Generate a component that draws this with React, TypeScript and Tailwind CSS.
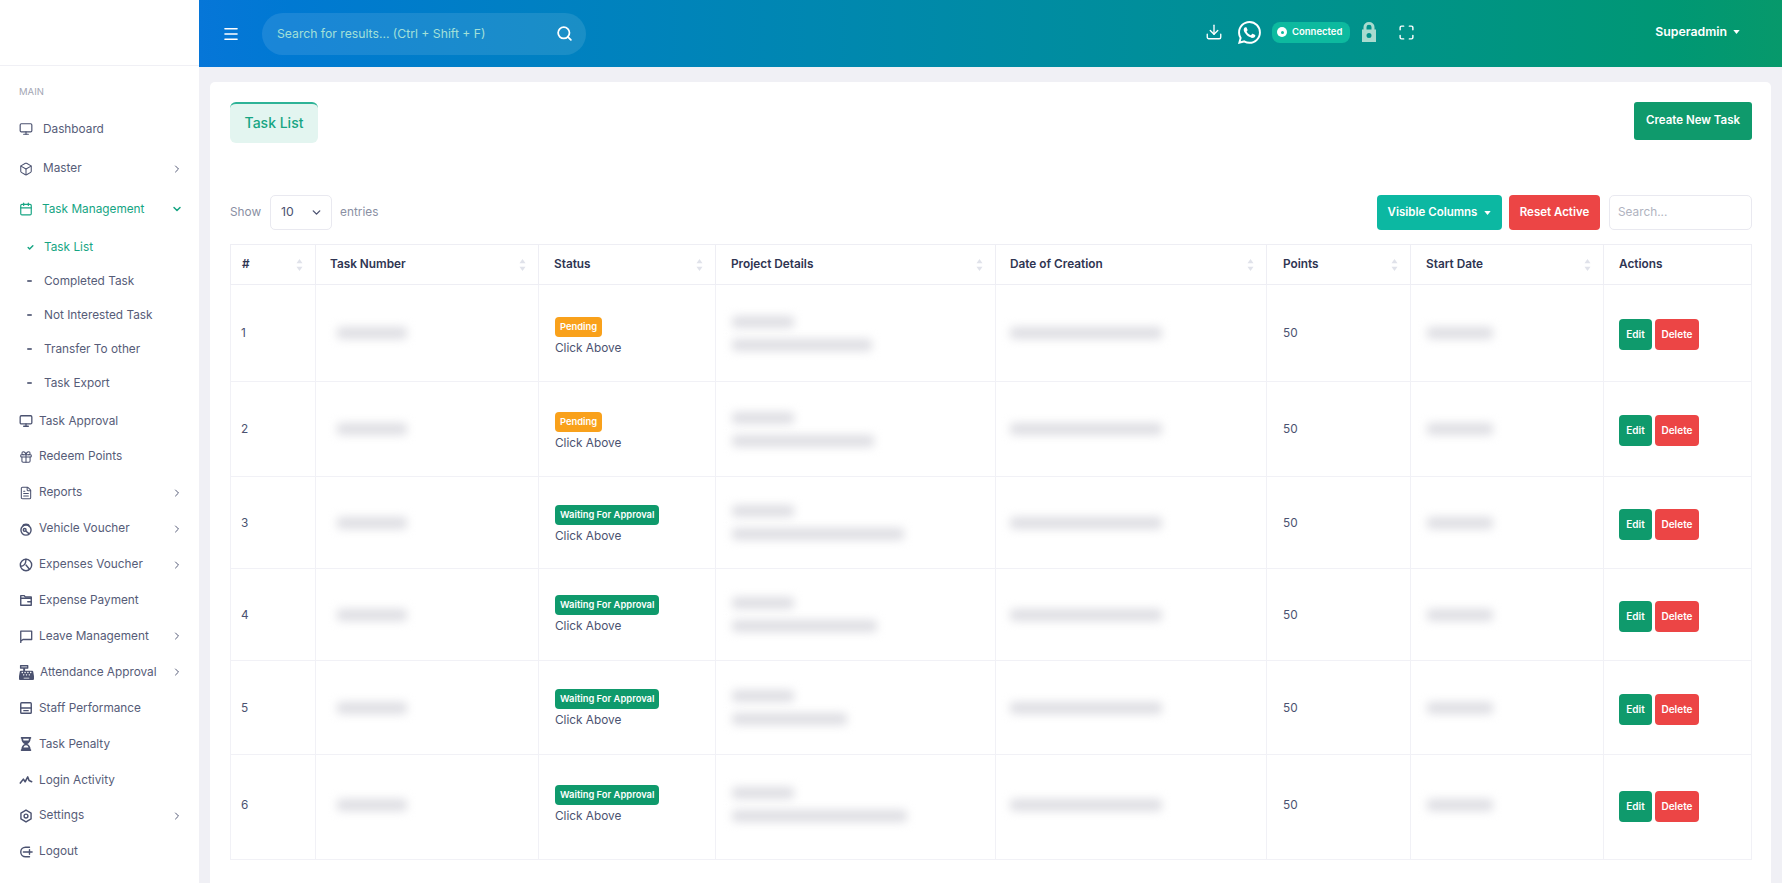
import { Box, Calendar, Check, ChevronDown, ChevronRight, Download, FileText, Gift, Menu, Monitor, Search, Maximize } from "lucide-react"
import { BsWhatsapp } from "react-icons/bs"
import { FaCashRegister, FaHourglassHalf } from "react-icons/fa"
import type { ReactNode } from "react"

const subItems = ["Task List", "Completed Task", "Not Interested Task", "Transfer To other", "Task Export"]

const iconClass = "w-[14px] h-[14px] text-[#4b5270] shrink-0"

function Glyph({ children, width = 1.6 }: { children: ReactNode; width?: number }) {
  return (
    <svg
      viewBox="0 0 16 16"
      className={iconClass}
      fill="none"
      stroke="currentColor"
      strokeWidth={width}
      strokeLinecap="round"
      strokeLinejoin="round"
    >
      {children}
    </svg>
  )
}

const navItems: { label: string; icon: ReactNode; arrow?: boolean }[] = [
  { label: "Task Approval", icon: <Monitor className={iconClass} strokeWidth={2.2} /> },
  { label: "Redeem Points", icon: <Gift className={iconClass} strokeWidth={1.8} /> },
  { label: "Reports", icon: <FileText className={iconClass} strokeWidth={1.8} />, arrow: true },
  {
    label: "Vehicle Voucher",
    icon: (
      <Glyph>
        <circle cx="8" cy="9.2" r="5.8" />
        <path d="M4.5 4.5C5 2 11 2 11.5 4.5" />
        <circle cx="6.5" cy="9" r="1.6" />
        <path d="M8 10.5l3 2.5" />
      </Glyph>
    ),
    arrow: true,
  },
  {
    label: "Expenses Voucher",
    icon: (
      <Glyph>
        <circle cx="8" cy="8" r="6.5" />
        <path d="M1.8 9.5C5 9.5 8 7 8 1.5" />
        <path d="M8 8l4 4.8" />
      </Glyph>
    ),
    arrow: true,
  },
  {
    label: "Expense Payment",
    icon: (
      <Glyph>
        <path d="M2 14V3h4l1 1.5h7V14z" />
        <path d="M2 6h12" />
        <path d="M10 10h4" />
      </Glyph>
    ),
  },
  {
    label: "Leave Management",
    icon: (
      <Glyph width={1.5}>
        <path d="M2 15.5V2.5h12.5v9.5H4.5L2 14" />
      </Glyph>
    ),
    arrow: true,
  },
  { label: "Attendance Approval", icon: <FaCashRegister className="w-[15px] h-[15px] text-[#4b5270] shrink-0" />, arrow: true },
  {
    label: "Staff Performance",
    icon: (
      <Glyph>
        <rect x="2" y="2" width="12" height="12" rx="1" />
        <path d="M2 8h12" />
        <path d="M5.5 11h5" />
      </Glyph>
    ),
  },
  { label: "Task Penalty", icon: <FaHourglassHalf className={iconClass} /> },
  {
    label: "Login Activity",
    icon: (
      <Glyph width={1.8}>
        <path d="M1.5 11.5L5 7l2 3 3-5.5 1.5 4 3 1.5" />
      </Glyph>
    ),
  },
  {
    label: "Settings",
    icon: (
      <Glyph>
        <path d="M8 1.2l5.8 3.4v6.8L8 14.8l-5.8-3.4V4.6z" />
        <circle cx="8" cy="8" r="2.2" />
      </Glyph>
    ),
    arrow: true,
  },
  {
    label: "Logout",
    icon: (
      <Glyph>
        <path d="M12 2.5H7.5a5.5 5.5 0 0 0 0 11H12" />
        <path d="M5 8h10" />
        <path d="M12 5.5v5" />
      </Glyph>
    ),
  },
]

const rows = [
  { id: 1, h: "h-[97px]", status: "Pending", statusPad: "pt-[7px]", detailW: "w-[140px]" },
  { id: 2, h: "h-[95px]", status: "Pending", statusPad: "pt-[6px]", detailW: "w-[142px]" },
  { id: 3, h: "h-[92px]", status: "Waiting For Approval", statusPad: "pt-[5px]", detailW: "w-[172px]" },
  { id: 4, h: "h-[92px]", status: "Waiting For Approval", statusPad: "pt-[1px]", detailW: "w-[145px]" },
  { id: 5, h: "h-[94px]", status: "Waiting For Approval", statusPad: "pt-[2px]", detailW: "w-[115px]" },
  { id: 6, h: "h-[105px] [&>td]:pb-[5px]", status: "Waiting For Approval", statusPad: "", detailW: "w-[175px]" },
]

function SortCaret() {
  return (
    <svg viewBox="0 0 8 14" className="w-[7px] h-[12px] text-[#e0e2ea] shrink-0" fill="currentColor">
      <path d="M4 0l3.5 5h-7z" />
      <path d="M4 14L.5 9h7z" />
    </svg>
  )
}

function Th({ label, w, pl, sort = true }: { label: string; w: string; pl: string; sort?: boolean }) {
  return (
    <th className={`${w} ${pl} border border-[#eeeef4] pr-[12px] pt-[1px] text-left font-semibold text-[#2f3552]`}>
      <div className="flex items-center justify-between">
        <span>{label}</span>
        {sort && <SortCaret />}
      </div>
    </th>
  )
}

function Blur({ w }: { w: string }) {
  return <div className={`${w} h-[12px] rounded-sm bg-[#dedee3] blur-[5px]`} />
}

export default function App() {
  return (
    <div className="flex h-screen overflow-hidden bg-[#f0f0f5] font-['Inter',sans-serif] text-[11.8px] text-[#4b5270]">
      {/* Sidebar */}
      <aside className="w-[199px] shrink-0 bg-white text-[#565c78]">
        <div className="h-[66px] border-b border-[#f0f0f5]" />
        <div className="h-[43px] pl-[19px] pt-[19px] text-[9.5px] leading-[14px] text-[#a3a6b4]">MAIN</div>

        <div className="flex h-[40px] items-center pl-[19px]">
          <Monitor className="w-[14px] h-[14px] shrink-0 text-[#4b5270]" strokeWidth={2} />
          <span className="ml-[10px] pt-[1px]">Dashboard</span>
        </div>
        <div className="flex h-[39px] items-center pl-[19px] pr-[16px]">
          <Box className="w-[14px] h-[14px] shrink-0 text-[#4b5270]" strokeWidth={1.8} />
          <span className="ml-[10px] flex-1">Master</span>
          <ChevronRight className="w-[12px] h-[12px]" />
        </div>
        <div className="flex h-[42px] items-center pl-[19px] pr-[16px] text-[#16a583]">
          <Calendar className="w-[14px] h-[14px] shrink-0" strokeWidth={2} />
          <span className="ml-[9px] flex-1 pt-[1px]">Task Management</span>
          <ChevronDown className="w-[12px] h-[12px]" strokeWidth={3} />
        </div>

        <div className="mb-[3px]">
          {subItems.map((item, i) => (
            <div key={item} className={`flex h-[34px] items-center pl-[27px] ${i === 0 ? "text-[#16a583]" : ""}`}>
              <div className="flex w-[7px] items-center">
                {i === 0 ? (
                  <Check className="w-[7px] h-[7px]" strokeWidth={5} />
                ) : (
                  <div className="h-[2px] w-[5px] rounded-sm bg-[#6b7189]" />
                )}
              </div>
              <span className="ml-[10px] pt-[1px]">{item}</span>
            </div>
          ))}
        </div>

        {navItems.map((item) => (
          <div key={item.label} className="flex h-[35.9px] items-center pl-[19px] pr-[16px]">
            {item.icon}
            <span className="ml-[6px] flex-1 pt-[1px]">{item.label}</span>
            {item.arrow && <ChevronRight className="w-[12px] h-[12px]" />}
          </div>
        ))}
      </aside>

      <div className="flex min-w-0 flex-1 flex-col">
        {/* Header */}
        <header className="flex h-[67px] shrink-0 items-center bg-gradient-to-r from-[#0676d8] to-[#07996b] pl-[23px] pr-[42px] text-white">
          <Menu className="w-[18px] h-[18px]" strokeWidth={2.2} />
          <div className="ml-[22px] flex h-[42px] w-[324px] items-center justify-between rounded-[21px] bg-white/10 pl-[15px] pr-[13px]">
            <span className="pt-[1px] text-[12.2px] text-[#a3e0d8]">Search for results... (Ctrl + Shift + F)</span>
            <Search className="w-[17px] h-[17px]" strokeWidth={2.5} />
          </div>
          <div className="ml-[619px] flex items-center pb-[3px]">
            <Download className="w-[18px] h-[18px]" strokeWidth={1.8} />
            <BsWhatsapp className="ml-[15px] w-[23px] h-[23px]" />
            <div className="ml-[11px] flex h-[21px] w-[78px] items-center rounded-[8px] bg-[#0dba9f] pl-[5px] text-[9.5px] font-semibold">
              <div className="flex h-[10px] w-[10px] items-center justify-center rounded-full bg-white">
                <div className="h-[3px] w-[3px] rounded-full bg-[#0dba9f]" />
              </div>
              <span className="ml-[5px]">Connected</span>
            </div>
            <svg viewBox="0 0 16 20" className="ml-[11px] w-[16px] h-[20px] text-[#a9dbcf]" fill="currentColor" fillRule="evenodd">
              <path d="M2.5 7.5V5a5.5 5 0 0 1 11 0v2.5H15V20H1V7.5zM5.5 7.5h5V5a2.5 2.2 0 0 0-5 0zM8 11a2.5 2.5 0 1 0 0 5 2.5 2.5 0 0 0 0-5z" />
            </svg>
            <Maximize className="ml-[21px] w-[17px] h-[17px]" strokeWidth={2} />
          </div>
          <div className="ml-auto flex items-center pb-[3px] text-[12.3px] font-semibold">
            <span>Superadmin</span>
            <svg viewBox="0 0 8 5" className="ml-[6px] w-[7px] h-[4px]" fill="currentColor">
              <path d="M0 0h8L4 5z" />
            </svg>
          </div>
        </header>

        {/* Content */}
        <main className="flex-1 px-[11px] pt-[15px]">
          <div className="h-[820px] rounded-[5px] bg-white pl-[20px] pr-[19px] pt-[20px]">
            <div className="flex items-start justify-between">
              <div className="flex h-[41px] w-[88px] items-center justify-center rounded-[6px] border-t-2 border-[#2eb397] bg-[#e3f5f0] pb-[3px] text-[14px] font-medium text-[#16a583]">
                Task List
              </div>
              <button className="h-[38px] w-[118px] rounded-[3px] bg-[#0f9a6c] text-[11.5px] font-semibold text-white">
                Create New Task
              </button>
            </div>

            <div className="mt-[52px] flex items-center">
              <span className="text-[#8a8fa3]">Show</span>
              <div className="ml-[9px] flex h-[35px] w-[62px] items-center justify-between rounded-[5px] border border-[#e9e9f0] pl-[10px] pr-[8px]">
                <span className="text-[12.3px]">10</span>
                <ChevronDown className="w-[13px] h-[13px]" strokeWidth={2.5} />
              </div>
              <span className="ml-[8px] text-[#8a8fa3]">entries</span>

              <button className="ml-auto flex h-[35px] w-[125px] items-center justify-center rounded-[4px] bg-[#0cb8a2] text-[11.5px] font-semibold text-white">
                Visible Columns
                <svg viewBox="0 0 8 5" className="ml-[7px] w-[7px] h-[4px]" fill="currentColor">
                  <path d="M0 0h8L4 5z" />
                </svg>
              </button>
              <button className="ml-[7px] h-[35px] w-[91px] rounded-[4px] bg-[#ec4545] text-[11.5px] font-semibold text-white">
                Reset Active
              </button>
              <div className="ml-[9px] flex h-[35px] w-[143px] items-center rounded-[5px] border border-[#e9e9f0] pl-[8px] text-[#b0b3c0]">
                Search...
              </div>
            </div>

            <table className="mt-[14px] w-[1521px] table-fixed border-collapse">
              <thead>
                <tr className="h-[40px]">
                  <Th label="#" w="w-[85px]" pl="pl-[11px]" />
                  <Th label="Task Number" w="w-[223px]" pl="pl-[14px]" />
                  <Th label="Status" w="w-[177px]" pl="pl-[15px]" />
                  <Th label="Project Details" w="w-[280px]" pl="pl-[15px]" />
                  <Th label="Date of Creation" w="w-[271px]" pl="pl-[14px]" />
                  <Th label="Points" w="w-[144px]" pl="pl-[16px]" />
                  <Th label="Start Date" w="w-[193px]" pl="pl-[15px]" />
                  <Th label="Actions" w="w-[148px]" pl="pl-[15px]" sort={false} />
                </tr>
              </thead>
              <tbody>
                {rows.map((row) => (
                  <tr key={row.id} className={row.h}>
                    <td className="border border-[#f1f1f6] pl-[10px] pt-[2px]">{row.id}</td>
                    <td className="border border-[#f1f1f6] pl-[21px]">
                      <Blur w="w-[70px]" />
                    </td>
                    <td className={`border border-[#f1f1f6] pl-[16px] ${row.statusPad}`}>
                      <span
                        className={`inline-block rounded-[4px] px-[5px] py-[3px] text-[9.4px] font-semibold leading-[14px] text-white ${
                          row.status === "Pending" ? "bg-[#f9a11b]" : "bg-[#0f9a6c]"
                        }`}
                      >
                        {row.status}
                      </span>
                      <div className="mt-[2px] leading-[18px]">Click Above</div>
                    </td>
                    <td className="border border-[#f1f1f6] pl-[16px]">
                      <Blur w="w-[62px]" />
                      <div className="h-[11px]" />
                      <Blur w={row.detailW} />
                    </td>
                    <td className="border border-[#f1f1f6] pl-[14px]">
                      <Blur w="w-[152px]" />
                    </td>
                    <td className="border border-[#f1f1f6] pl-[16px] pt-[2px]">50</td>
                    <td className="border border-[#f1f1f6] pl-[16px]">
                      <Blur w="w-[66px]" />
                    </td>
                    <td className="border border-[#f1f1f6] pl-[15px]">
                      <div className="flex gap-[3px] pt-[3px] text-[10px] font-semibold text-white">
                        <button className="h-[31px] w-[33px] rounded-[4px] bg-[#0f9a6c]">Edit</button>
                        <button className="h-[31px] w-[44px] rounded-[4px] bg-[#ec4545]">Delete</button>
                      </div>
                    </td>
                  </tr>
                ))}
              </tbody>
            </table>
          </div>
        </main>
      </div>
    </div>
  )
}
